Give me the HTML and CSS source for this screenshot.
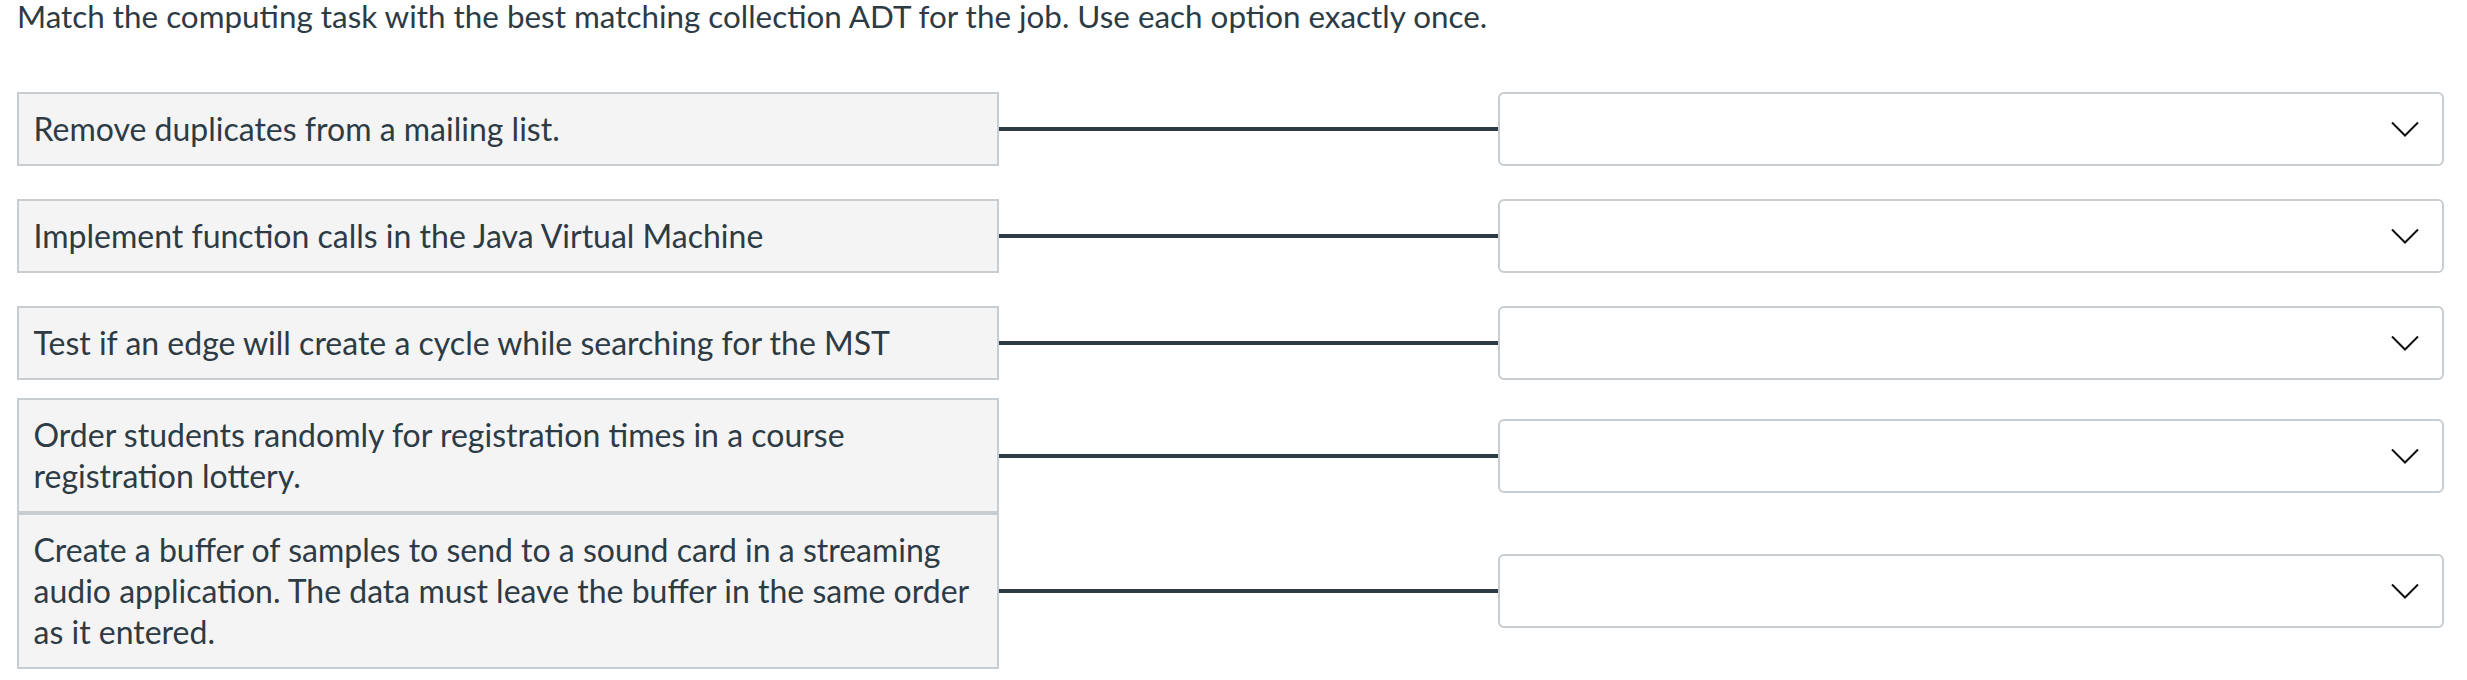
FILE: index.html
```html
<!DOCTYPE html>
<html lang="en">

<head>
    <meta charset="UTF-8">
    <meta name="viewport" content="width=device-width, initial-scale=1.0">
    <title>Matching</title>
    <link rel="stylesheet" href="styles.css">
</head>

<body>
    <div id="question">
        <p class="questionText">Match the computing task with the best matching collection ADT for the job. Use each option exactly once.</p>

        <div class="answers">
            <div class="answer">
                <div class="matchLeft">Remove duplicates from a mailing list.</div>
                <div class="matchLine"></div>
                <div class="matchSelect">
                    <svg class="chevron" width="28" height="16" viewBox="0 0 28 16"><polyline points="1,1.5 14,14.5 27,1.5" /></svg>
                </div>
            </div>

            <div class="answer">
                <div class="matchLeft">Implement function calls in the Java Virtual Machine</div>
                <div class="matchLine"></div>
                <div class="matchSelect">
                    <svg class="chevron" width="28" height="16" viewBox="0 0 28 16"><polyline points="1,1.5 14,14.5 27,1.5" /></svg>
                </div>
            </div>

            <div class="answer">
                <div class="matchLeft">Test if an edge will create a cycle while searching for the MST</div>
                <div class="matchLine"></div>
                <div class="matchSelect">
                    <svg class="chevron" width="28" height="16" viewBox="0 0 28 16"><polyline points="1,1.5 14,14.5 27,1.5" /></svg>
                </div>
            </div>

            <div class="answer answer-near">
                <div class="matchLeft">Order students randomly for registration times in a course registration lottery.</div>
                <div class="matchLine"></div>
                <div class="matchSelect">
                    <svg class="chevron" width="28" height="16" viewBox="0 0 28 16"><polyline points="1,1.5 14,14.5 27,1.5" /></svg>
                </div>
            </div>

            <div class="answer answer-flush">
                <div class="matchLeft">Create a buffer of samples to send to a sound card in a streaming audio application. The data must leave the buffer in the same order as it entered.</div>
                <div class="matchLine"></div>
                <div class="matchSelect">
                    <svg class="chevron" width="28" height="16" viewBox="0 0 28 16"><polyline points="1,1.5 14,14.5 27,1.5" /></svg>
                </div>
            </div>
        </div>
    </div>
</body>
</html>
```

FILE: styles.css
```css
body {
    margin: 0;
    background-color: white;
    font-family: Lato, "Noto Sans", sans-serif;
    color: #2d3b45;
}

#question {
    padding: 0 23px 0 17px;
}

.questionText {
    margin: -4px 0 0 0;
    font-size: 31.4px;
    line-height: 41px;
}

.answers {
    display: flex;
    flex-direction: column;
    margin-top: 55px;
}

/* each row: prompt box, connector line, dropdown */
.answer {
    display: grid;
    grid-template-columns: 982px 499px 1fr;
    align-items: center;
    margin-top: 33px;
}

.answer:first-child {
    margin-top: 0;
}

.answer-near {
    margin-top: 18px;
}

.answer-flush {
    margin-top: 0;
}

.matchLeft {
    background-color: #f4f4f4;
    border: 2px solid #c7cdd1;
    padding: 13.5px 14.5px 15.5px 14.5px;
    font-size: 32px;
    line-height: 41px;
}

.matchLine {
    height: 4px;
    background-color: #2d3b45;
}

.matchSelect {
    height: 74px;
    box-sizing: border-box;
    border: 2px solid #c7cdd1;
    border-radius: 6px;
    background-color: white;
    display: flex;
    align-items: center;
    justify-content: flex-end;
    padding-right: 23px;
}

.chevron polyline {
    fill: none;
    stroke: #111;
    stroke-width: 2;
}
```
